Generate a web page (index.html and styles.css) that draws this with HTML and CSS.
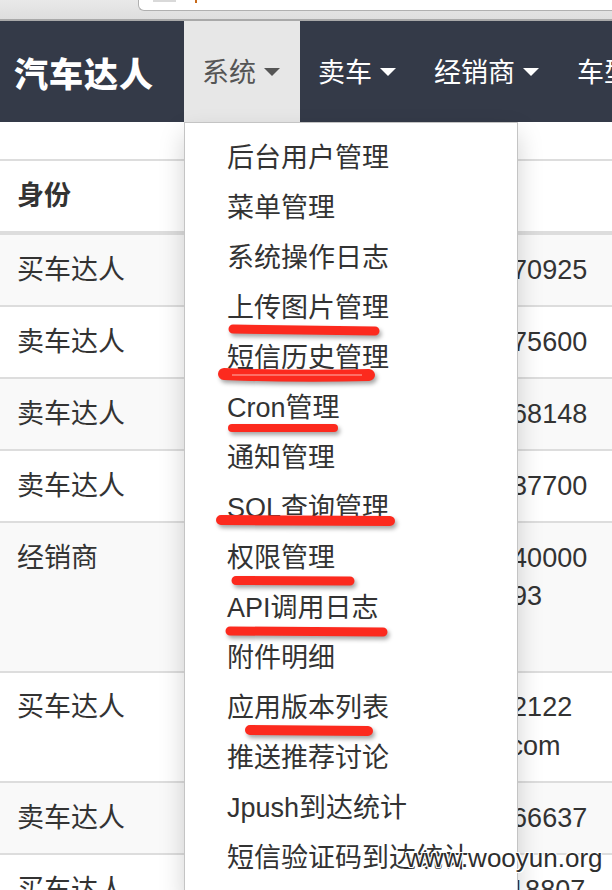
FILE: index.html
```html
<!DOCTYPE html>
<html lang="zh-CN">
<head>
<meta charset="utf-8">
<title>汽车达人</title>
<link rel="stylesheet" href="styles.css">
</head>
<body>
<div class="chrome">
  <div class="urlbar"><span class="favicon"></span><span class="urldot"></span></div>
</div>
<nav class="navbar">
  <a class="brand">汽车达人</a>
  <ul class="nav">
    <li class="dropdown">
      <a class="nav-link active">系统<span class="caret"></span></a>
      <ul class="dropdown-menu">
        <li><a>后台用户管理</a></li>
        <li><a>菜单管理</a></li>
        <li><a>系统操作日志</a></li>
        <li><a>上传图片管理</a></li>
        <li><a>短信历史管理</a></li>
        <li><a>Cron管理</a></li>
        <li><a>通知管理</a></li>
        <li><a>SQL查询管理</a></li>
        <li><a>权限管理</a></li>
        <li><a>API调用日志</a></li>
        <li><a>附件明细</a></li>
        <li><a>应用版本列表</a></li>
        <li><a>推送推荐讨论</a></li>
        <li><a>Jpush到达统计</a></li>
        <li><a>短信验证码到达统计</a></li>
      </ul>
    </li>
    <li><a class="nav-link">卖车<span class="caret"></span></a></li>
    <li><a class="nav-link">经销商<span class="caret"></span></a></li>
    <li><a class="nav-link">车型<span class="caret"></span></a></li>
  </ul>
</nav>
<main class="content">
  <table class="table">
    <colgroup><col class="c1"><col class="c2"><col class="c3"></colgroup>
    <thead>
      <tr><th>身份</th><th>用户名</th><th>手机号</th></tr>
    </thead>
    <tbody>
      <tr><td>买车达人</td><td>王先生</td><td>15218070925</td></tr>
      <tr><td>卖车达人</td><td>李女士</td><td>13905775600</td></tr>
      <tr><td>卖车达人</td><td>陈先生</td><td>18621368148</td></tr>
      <tr><td>卖车达人</td><td>赵先生</td><td>13757137700</td></tr>
      <tr><td>经销商</td><td>杭州某某汽车销售服务有限公司</td><td>80082040000<br>40082093</td></tr>
      <tr><td>买车达人</td><td>刘先生</td><td>1590662122<br>t1@qq.com</td></tr>
      <tr><td>卖车达人</td><td>周女士</td><td>13858166637</td></tr>
      <tr><td>买车达人</td><td>吴先生</td><td>18657118807</td></tr>
    </tbody>
  </table>
</main>
<svg class="marks" width="612" height="890" viewBox="0 0 612 890">
  <g class="strokes">
    <path d="M233 329 L375 331" stroke-width="9"/>
    <path d="M224 374 Q300 377 369 375" stroke-width="12"/>
    <path d="M232 428 L334 428" stroke-width="8"/>
    <path d="M221 520 L390 521" stroke-width="10"/>
    <path d="M236 580.5 L350 581" stroke-width="9"/>
    <path d="M230 631 L383 632" stroke-width="9"/>
    <path d="M250 730 L368 731" stroke-width="10"/>
  </g>
  <path class="seam" d="M232 375 L362 375"/>
</svg>
<div class="watermark">www.wooyun.org</div>
</body>
</html>
```

FILE: styles.css
```css
html, body {
  margin: 0;
  padding: 0;
}
body {
  width: 612px;
  height: 890px;
  overflow: hidden;
  position: relative;
  background: #fff;
  color: #333;
  font-family: "Liberation Sans", "Noto Sans CJK SC", sans-serif;
  font-size: 27px;
}

/* browser chrome strip */
.chrome {
  height: 19px;
  background: linear-gradient(#e9e9e9, #dedede);
  border-bottom: 2px solid #a9a9a9;
  display: flex;
  padding-left: 138px;
  overflow: hidden;
}
.urlbar {
  flex: 1;
  height: 10px;
  background: #fff;
  border: 1px solid #b0b0b0;
  border-top: none;
  border-right: none;
  border-radius: 0 0 0 6px;
  display: flex;
  align-items: flex-start;
  padding-left: 14px;
  gap: 19px;
}
.favicon {
  width: 23px;
  height: 2px;
  background: #d9d9d9;
}
.urldot {
  width: 2px;
  height: 3px;
  background: #c86a1a;
}

/* navbar */
.navbar {
  display: flex;
  height: 101px;
  background: #343a48;
  white-space: nowrap;
}
.brand {
  flex: 0 0 184px;
  box-sizing: border-box;
  padding-left: 14px;
  display: flex;
  align-items: center;
  color: #fff;
  font-family: "Noto Sans CJK SC", sans-serif;
  font-weight: 900;
  font-size: 34px;
  letter-spacing: 1px;
  line-height: 1;
  padding-top: 2px;
}
.nav {
  display: flex;
  margin: 0;
  padding: 0;
  list-style: none;
}
.nav > li {
  position: relative;
  display: flex;
}
.nav-link {
  display: flex;
  align-items: center;
  padding: 0 20px 0 18px;
  color: #fff;
  font-size: 27px;
  line-height: 1;
  padding-top: 3px;
}
.nav-link.active {
  background: #e7e7e7;
  color: #555;
}
.caret {
  display: inline-block;
  width: 0;
  height: 0;
  margin-left: 8px;
  border-top: 8px solid currentColor;
  border-left: 8px solid transparent;
  border-right: 8px solid transparent;
  margin-top: -2px;
}

/* dropdown */
.dropdown-menu {
  position: absolute;
  top: 100%;
  left: 0;
  width: 334px;
  box-sizing: border-box;
  margin: 0;
  padding: 10px 0;
  list-style: none;
  background: #fff;
  border: 1px solid #c4c4c4;
  box-shadow: 0 12px 24px rgba(0, 0, 0, 0.18);
  z-index: 10;
}
.dropdown-menu a {
  display: block;
  padding: 6px 20px 6px 42px;
  line-height: 38px;
  font-size: 27px;
  color: #333;
  white-space: nowrap;
}

/* table */
.content {
  padding-top: 37px;
}
.table {
  width: 612px;
  table-layout: fixed;
  border-collapse: separate;
  border-spacing: 0;
}
.c1 { width: 205px; }
.c2 { width: 200px; }
.c3 { width: 207px; }
.table th,
.table td {
  text-align: left;
  vertical-align: top;
  padding: 15.6px 18px 15.6px 17px;
  line-height: 38.8px;
  font-size: 27px;
}
.table th {
  font-weight: bold;
  border-top: 2px solid #dddddd;
  border-bottom: 4px solid #dddddd;
}
.table td {
  border-top: 2px solid #dddddd;
  font-weight: normal;
}
.table tbody tr:first-child td {
  border-top: none;
}
.table tbody tr:nth-child(odd) td {
  background: #f9f9f9;
}

/* annotation marks */
.marks {
  position: absolute;
  left: 0;
  top: 0;
  z-index: 20;
  pointer-events: none;
}
.strokes {
  fill: none;
  stroke: #fc2a1e;
  stroke-linecap: round;
  filter: drop-shadow(2px 3px 2px rgba(0, 0, 0, 0.35));
}
.seam {
  fill: none;
  stroke: rgba(255, 215, 210, 0.8);
  stroke-width: 1;
}

/* watermark */
.watermark {
  position: absolute;
  left: 406px;
  top: 845px;
  z-index: 30;
  font-family: "Liberation Sans", sans-serif;
  font-size: 26px;
  line-height: 26px;
  color: #2e2e2e;
  text-shadow: 1px 1px 0 #fff, -1px -1px 0 #fff, 1px -1px 0 #fff, -1px 1px 0 #fff;
}
```
